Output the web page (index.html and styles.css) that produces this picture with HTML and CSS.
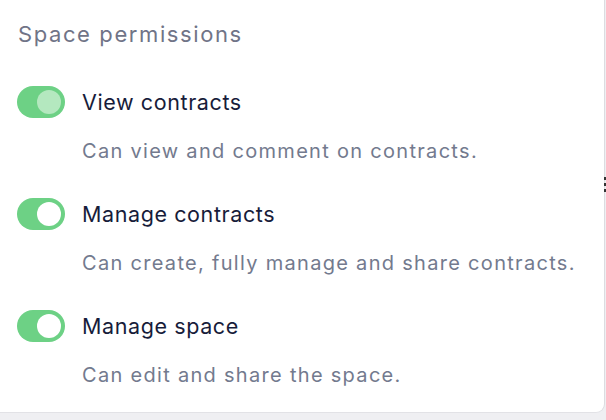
FILE: index.html
```html
<!DOCTYPE html>
<html>
<head>
<meta charset="utf-8">
<link rel="stylesheet" href="styles.css">
</head>
<body>
<div class="card">
  <h2 class="title">Space permissions</h2>
  <div class="list">
    <div class="perm">
      <div class="perm-head">
        <span class="toggle toggle-locked"><span class="knob"></span></span>
        <span class="label">View contracts</span>
      </div>
      <p class="desc">Can view and comment on contracts.</p>
    </div>
    <div class="perm">
      <div class="perm-head">
        <span class="toggle"><span class="knob"></span></span>
        <span class="label">Manage contracts</span>
      </div>
      <p class="desc">Can create, fully manage and share contracts.</p>
    </div>
    <div class="perm">
      <div class="perm-head">
        <span class="toggle"><span class="knob"></span></span>
        <span class="label">Manage space</span>
      </div>
      <p class="desc">Can edit and share the space.</p>
    </div>
  </div>
  <span class="handle"><i></i><i></i><i></i></span>
</div>
</body>
</html>
```
FILE: styles.css
```css
* { box-sizing: border-box; }
body {
  margin: 0;
  background: #efeff2;
  font-family: Inter, "Liberation Sans", sans-serif;
  width: 606px;
  height: 420px;
  overflow: hidden;
}
.card {
  position: relative;
  width: 605px;
  height: 413px;
  background: #fff;
  border-right: 1px solid #dcdce0;
  border-bottom: 1px solid #e2e2e6;
  border-bottom-right-radius: 9px;
  padding: 20px 0 0 17px;
}
.title {
  margin: 0 0 0 1px;
  font-size: 22px;
  letter-spacing: 1.6px;
  line-height: 28px;
  font-weight: 400;
  color: #707487;
}
.list {
  display: flex;
  flex-direction: column;
  gap: 34px;
  margin-top: 38px;
}
.perm-head {
  display: flex;
  align-items: center;
  gap: 17px;
  height: 32px;
}
.toggle {
  width: 48px;
  height: 32px;
  border-radius: 16px;
  background: #6dd185;
  display: flex;
  align-items: center;
  justify-content: flex-end;
  padding: 4px;
}
.knob {
  width: 24px;
  height: 24px;
  border-radius: 50%;
  background: #fff;
}
.toggle-locked .knob { background: #b4e8bf; }
.label {
  font-size: 21.5px;
  letter-spacing: 0.6px;
  color: #171c3a;
}
.desc {
  margin: 20px 0 0 65px;
  font-size: 20px;
  letter-spacing: 1.3px;
  line-height: 26px;
  color: #737a8e;
}
.handle {
  position: absolute;
  right: -2px;
  top: 177px;
  display: flex;
  flex-direction: column;
  gap: 3px;
}
.handle i {
  display: block;
  width: 2px;
  height: 3px;
  background: #333;
}
```
